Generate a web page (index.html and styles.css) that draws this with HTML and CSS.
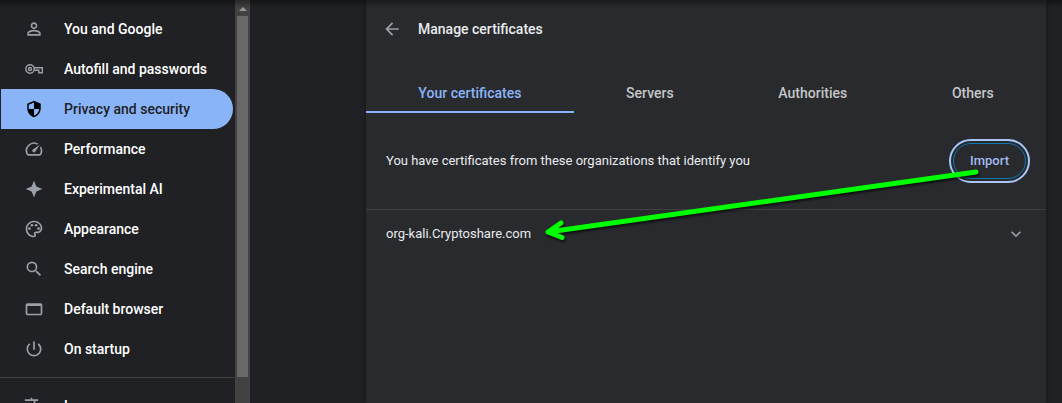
FILE: index.html
```html
<!DOCTYPE html>
<html lang="en">
<head>
<meta charset="utf-8">
<title>Settings - Manage certificates</title>
<link rel="stylesheet" href="styles.css">
</head>
<body>
<div class="app">
  <nav class="sidebar">
    <a class="item"><svg class="icon" viewBox="0 0 24 24"><path d="M12 5.9a2.1 2.1 0 1 1 0 4.2 2.1 2.1 0 0 1 0-4.2m0 9c2.970 0 6.100 1.460 6.100 2.100v1.100H5.900V17c0-.64 3.130-2.100 6.100-2.100M12 4C9.790 4 8 5.790 8 8s1.790 4 4 4 4-1.790 4-4-1.790-4-4-4m0 9c-2.670 0-8 1.340-8 4v3h16v-3c0-2.660-5.330-4-8-4"/></svg><span>You and Google</span></a>
    <a class="item"><svg class="icon key" viewBox="0 0 20 20"><circle cx="6" cy="10" r="4.200"/><circle cx="6" cy="10" r="1.500"/><path d="M10 8.700h8.300v5h-3.500v-2.400H10"/></svg><span>Autofill and passwords</span></a>
    <a class="item selected"><svg class="icon" viewBox="0 0 24 24"><path d="M12 1 3 5v6c0 5.550 3.840 10.740 9 12 5.160-1.260 9-6.450 9-12V5zm0 10.990h7c-.53 4.120-3.280 7.790-7 8.940V12H5V6.300l7-3.110z" transform="translate(1.200 1.200) scale(.9)"/></svg><span>Privacy and security</span></a>
    <a class="item"><svg class="icon" viewBox="0 0 24 24"><path d="m20.380 8.570-1.230 1.850a8 8 0 0 1-.22 7.580H5.070A8 8 0 0 1 15.580 6.850l1.850-1.230A10 10 0 0 0 3.350 19a2 2 0 0 0 1.720 1h13.850a2 2 0 0 0 1.740-1 10 10 0 0 0-.27-10.440zm-9.790 6.840a2 2 0 0 0 2.830 0l5.660-8.490-8.490 5.660a2 2 0 0 0 0 2.830"/></svg><span>Performance</span></a>
    <a class="item"><svg class="icon" viewBox="0 0 24 24"><path d="M12 2 14.900 9.100 22 12l-7.100 2.900L12 22l-2.900-7.100L2 12l7.100-2.900z"/></svg><span>Experimental AI</span></a>
    <a class="item"><svg class="icon" viewBox="0 0 24 24"><path d="M12 22C6.490 22 2 17.510 2 12S6.490 2 12 2s10 4.040 10 9c0 3.310-2.690 6-6 6h-1.770c-.28 0-.5.220-.5.500 0 .12.050.23.130.33.410.47.640 1.060.64 1.670A2.500 2.500 0 0 1 12 22m0-18c-4.410 0-8 3.590-8 8s3.590 8 8 8c.28 0 .5-.22.500-.5a.54.54 0 0 0-.14-.35c-.41-.46-.63-1.050-.63-1.650a2.500 2.500 0 0 1 2.500-2.500H16c2.210 0 4-1.790 4-4 0-3.860-3.590-7-8-7"/><circle cx="6.500" cy="11.500" r="1.600"/><circle cx="9.500" cy="7.500" r="1.600"/><circle cx="14.500" cy="7.500" r="1.600"/><circle cx="17.500" cy="11.500" r="1.600"/></svg><span>Appearance</span></a>
    <a class="item"><svg class="icon" viewBox="0 0 24 24"><path d="M15.500 14h-.79l-.28-.27A6.470 6.470 0 0 0 16 9.500 6.500 6.500 0 1 0 9.500 16c1.610 0 3.090-.59 4.230-1.570l.27.28v.79l5 4.990L20.490 19zm-6 0a4.500 4.500 0 1 1 0-9 4.500 4.500 0 0 1 0 9"/></svg><span>Search engine</span></a>
    <a class="item"><svg class="icon" viewBox="0 0 24 24"><path d="M20 5H4a2 2 0 0 0-2 2v10.500a2 2 0 0 0 2 2h16a2 2 0 0 0 2-2V7a2 2 0 0 0-2-2m0 12.800H4V8.500h16z"/></svg><span>Default browser</span></a>
    <a class="item"><svg class="icon" viewBox="0 0 24 24"><path d="M13 3h-2v10h2zm4.830 2.170-1.420 1.420A6.920 6.920 0 0 1 19 12a7 7 0 1 1-11.420-5.420L6.170 5.170A8.930 8.930 0 0 0 3 12a9 9 0 1 0 14.830-6.830"/></svg><span>On startup</span></a>
    <div class="separator"></div>
    <a class="item"><svg class="icon" viewBox="0 0 24 24"><path d="m12.870 15.070-2.540-2.510.03-.03A17.520 17.520 0 0 0 14.070 6H17V4h-7V2H8v2H1v1.990h11.170A15.650 15.650 0 0 1 9 11.350 15.650 15.650 0 0 1 6.690 8h-2a17.600 17.600 0 0 0 2.980 4.560l-5.090 5.020L4 19l5-5 3.110 3.110zM18.500 10h-2L12 22h2l1.120-3h4.750L21 22h2zm-2.620 7 1.620-4.330L19.120 17z"/></svg><span>Languages</span></a>
  </nav>
  <div class="scrollbar"><div class="scroll-up"></div><div class="thumb"></div></div>
  <main class="content">
    <section class="card">
      <header class="header">
        <svg class="icon" viewBox="0 0 24 24"><path d="M20 11H7.830l5.590-5.590L12 4l-8 8 8 8 1.410-1.410L7.830 13H20z"/></svg>
        <h1>Manage certificates</h1>
      </header>
      <div class="tabs">
        <div class="tab active">Your certificates</div>
        <div class="tab">Servers</div>
        <div class="tab">Authorities</div>
        <div class="tab">Others</div>
      </div>
      <div class="intro">
        <span>You have certificates from these organizations that identify you</span>
        <button class="import">Import</button>
      </div>
      <div class="entry">
        <span>org-kali.Cryptoshare.com</span>
        <svg class="icon" viewBox="0 0 24 24"><path d="M16.590 8.590 12 13.170 7.410 8.590 6 10l6 6 6-6z"/></svg>
      </div>
    </section>
  </main>
  <div class="top-shade"></div>
  <svg class="arrow" viewBox="0 0 1062 403"><path d="M976 172 548 232M561 223 548 232 562 237.500"/></svg>
</div>
</body>
</html>
```
FILE: styles.css
```css
* { box-sizing: border-box; }
body {
  margin: 0;
  background: #202124;
  color: #e8eaed;
  font: 13px/20px Roboto, sans-serif;
}
.app {
  position: relative;
  display: flex;
  width: 1062px;
  height: 403px;
  overflow: hidden;
}
.icon {
  flex: none;
  width: 20px;
  height: 20px;
  fill: currentColor;
  color: #9aa0a6;
}
.key { fill: none; stroke: currentColor; stroke-width: 1.4; }
.sidebar {
  width: 235px;
  height: 403px;
  padding-top: 9px;
  overflow: hidden;
}
.item {
  display: flex;
  align-items: center;
  gap: 20px;
  height: 40px;
  margin: 0 2px 0 1px;
  padding-left: 23px;
  border-radius: 0 20px 20px 0;
  color: #fff;
  font-size: 14px;
  font-weight: 500;
}
.selected { background: #8ab4f8; color: #202124; }
.selected .icon { color: #000; }
.separator { height: 1px; margin: 8px 0; background: #3f4042; }
.scrollbar {
  width: 15px;
  padding: 7px 2px 0;
  background: #424242;
}
.scroll-up {
  width: 0;
  height: 4px;
  margin: 0 auto 5px;
  border: 4px solid transparent;
  border-top: 0;
  border-bottom-color: #959595;
}
.thumb { height: 361px; background: #686868; }
.content { flex: 1; padding: 0 16px 0 116px; }
.card {
  width: 680px;
  height: 403px;
  background: #292a2d;
  box-shadow: 0 0 4px rgba(0, 0, 0, .4);
}
.header {
  display: flex;
  align-items: center;
  gap: 16px;
  height: 58px;
  padding-left: 16px;
}
h1 { margin: 0; font-size: 14px; font-weight: 500; }
.tabs { display: flex; height: 55px; padding-top: 15px; }
.tab {
  flex: 1 1 auto;
  height: 40px;
  line-height: 40px;
  text-align: center;
  font-size: 14px;
  font-weight: 500;
  color: #c4c5c7;
}
.active { color: #8ab4f8; border-bottom: 2px solid #8ab4f8; }
.intro {
  display: flex;
  align-items: center;
  justify-content: space-between;
  height: 97px;
  padding: 0 20px;
  border-bottom: 1px solid #3f4042;
}
.import {
  width: 73px;
  height: 36px;
  padding: 0 0 1px;
  border: 1px solid #0b78b0;
  border-radius: 18px;
  outline: 2px solid #a8c7fa;
  outline-offset: 2px;
  background: transparent;
  color: #a2b9ee;
  font: 500 13px Roboto, sans-serif;
}
.entry {
  display: flex;
  align-items: center;
  justify-content: space-between;
  height: 48px;
  padding: 0 20px;
}
.top-shade {
  position: absolute;
  inset: 0 0 auto;
  height: 8px;
  background: linear-gradient(rgba(0, 0, 0, .4), transparent);
}
.arrow {
  position: absolute;
  inset: 0;
  fill: none;
  stroke: #0f0;
  stroke-width: 5;
  stroke-linecap: round;
  stroke-linejoin: round;
  filter: drop-shadow(1px 2px 1px rgba(0, 0, 0, .65));
}
```
